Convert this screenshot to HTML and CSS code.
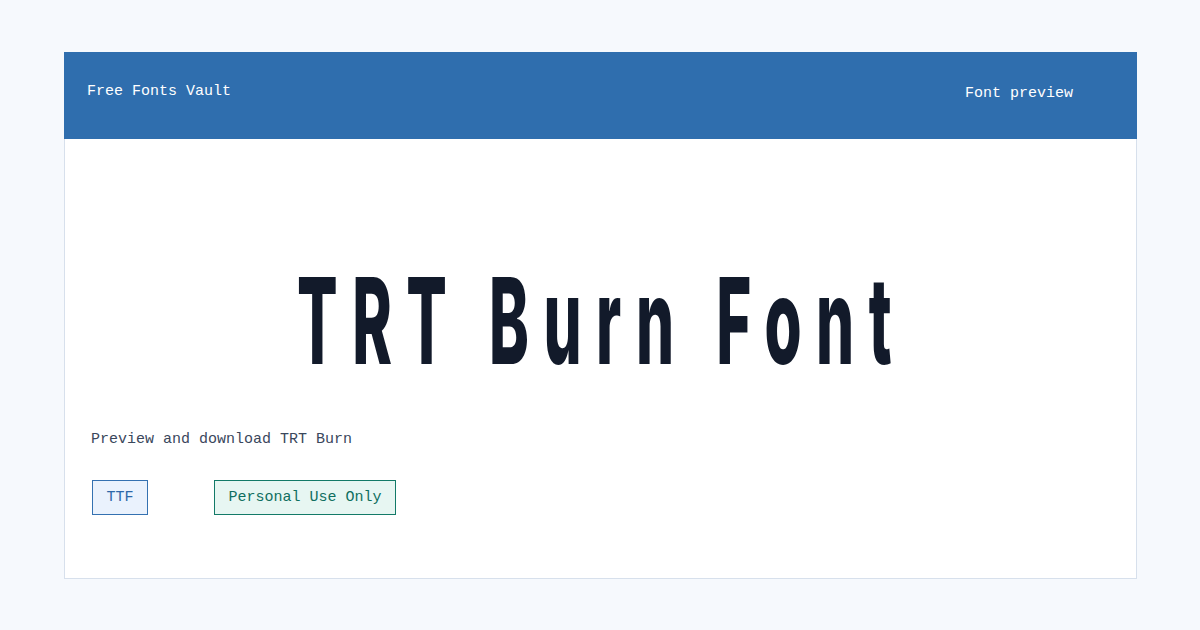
FILE: index.html
```html
<!DOCTYPE html>
<html lang="en">
<head>
  <meta charset="UTF-8" />
  <title>TRT Burn Font - Free Fonts Vault</title>
  <link rel="stylesheet" href="styles.css">
</head>
<body>

<div class="card">
  <!-- Barre du haut -->
  <div class="topbar">
    <span class="brand">Free Fonts Vault</span>
    <span class="tag">Font preview</span>
  </div>

  <div class="content">
    <div class="title-wrap">
      <h1 class="title">TRT Burn Font</h1>
    </div>
    <p class="desc">Preview and download TRT Burn</p>
    <div class="badges">
      <span class="badge badge-format">TTF</span>
      <span class="badge badge-license">Personal Use Only</span>
    </div>
  </div>
</div>

</body>
</html>
```

FILE: styles.css
```css
body {
  margin: 0;
  padding: 52px 63px 0 64px;
  background-color: #f6f9fd;
  font-family: "Liberation Mono", monospace;
  font-size: 15px;
}

/* Carte principale */
.card {
  width: 1073px;
  height: 527px;
  box-sizing: border-box;
  background: #fff;
  border: 1px solid #d7e0ec;
  border-top: none;
  display: flex;
  flex-direction: column;
}

.topbar {
  height: 87px;
  margin: 0 -1px;
  background-color: #2f6eae;
  color: #fff;
  display: flex;
  justify-content: space-between;
  padding: 0 64px 0 23px;
}

.brand {
  margin-top: 31px;
}

.tag {
  margin-top: 33px;
}

.content {
  padding: 0 26px;
}

.title-wrap {
  padding-top: 122px;
  display: flex;
  justify-content: center;
}

.title {
  margin: 0;
  padding-left: 6px;
  font-family: Inter, "Liberation Sans", sans-serif;
  font-weight: 800;
  font-size: 120px;
  line-height: 120px;
  letter-spacing: 29px;
  color: #121a2a;
  transform: scaleX(0.5);
  white-space: nowrap;
}

.desc {
  margin: 49px 0 0;
  color: #3a475c;
  line-height: 20px;
}

.badges {
  margin: 30px 0 0 1px;
  display: flex;
  gap: 66px;
}

.badge {
  padding: 8px 13.5px;
  line-height: 17px;
  border: 1px solid;
}

.badge-format {
  background: #eaf2fd;
  border-color: #3471b1;
  color: #2d67a8;
}

.badge-license {
  background: #e7f6f2;
  border-color: #137a68;
  color: #0f6f5f;
}
```
